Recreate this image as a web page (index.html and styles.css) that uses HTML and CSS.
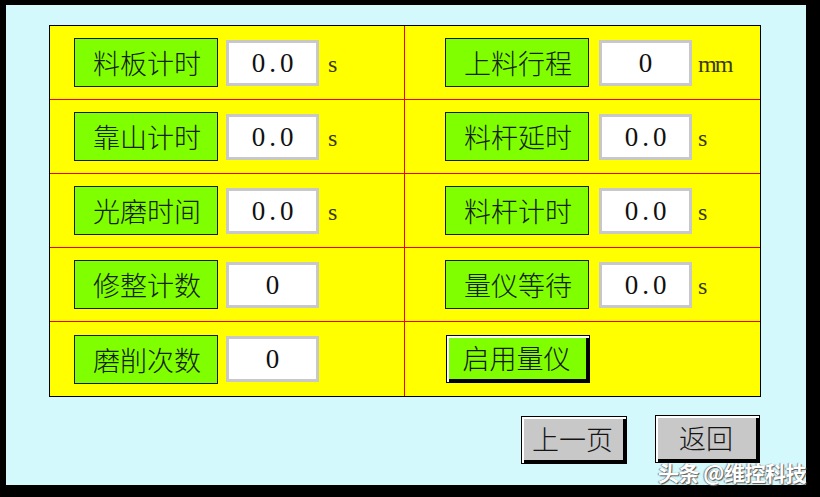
FILE: index.html
```html
<!DOCTYPE html>
<html lang="zh-CN">
<head>
<meta charset="utf-8">
<title>参数设置</title>
<link rel="stylesheet" href="styles.css">
</head>
<body>
<div class="screen">
  <div class="panel">
    <div class="cell left">
      <div class="label">料板计时</div><div class="field">0.0</div><span class="unit">s</span>
    </div>
    <div class="cell right">
      <div class="label">上料行程</div><div class="field">0</div><span class="unit">mm</span>
    </div>
    <div class="cell left">
      <div class="label">靠山计时</div><div class="field">0.0</div><span class="unit">s</span>
    </div>
    <div class="cell right">
      <div class="label">料杆延时</div><div class="field">0.0</div><span class="unit">s</span>
    </div>
    <div class="cell left">
      <div class="label">光磨时间</div><div class="field">0.0</div><span class="unit">s</span>
    </div>
    <div class="cell right">
      <div class="label">料杆计时</div><div class="field">0.0</div><span class="unit">s</span>
    </div>
    <div class="cell left">
      <div class="label">修整计数</div><div class="field">0</div>
    </div>
    <div class="cell right">
      <div class="label">量仪等待</div><div class="field">0.0</div><span class="unit">s</span>
    </div>
    <div class="cell left">
      <div class="label">磨削次数</div><div class="field">0</div>
    </div>
    <div class="cell right">
      <div class="btn btn-green">启用量仪</div>
    </div>
  </div>
  <div class="actions">
    <div class="btn btn-gray btn-prev">上一页</div>
    <div class="btn btn-gray btn-back">返回</div>
  </div>
  <div class="watermark">头条 @维控科技</div>
</div>
</body>
</html>
```

FILE: styles.css
```css
html, body {
  margin: 0;
  padding: 0;
  background: #000;
}

body {
  width: 820px;
  height: 497px;
  overflow: hidden;
  padding-top: 5px;
  padding-left: 6px;
  box-sizing: border-box;
}

.screen {
  position: relative;
  width: 800px;
  height: 480px;
  background: #d4f9fc;
  padding: 20px 0 0 43px;
  box-sizing: border-box;
  font-family: "Noto Sans CJK SC", "Noto Sans", sans-serif;
}

.panel {
  width: 712px;
  height: 372px;
  box-sizing: border-box;
  border: 1px solid #000;
  background: #f00000;
  display: grid;
  grid-template-columns: 354px 355px;
  grid-template-rows: 73px 73px 73px 73px 74px;
  column-gap: 1px;
  row-gap: 1px;
}

.cell {
  background: #ffff00;
  display: flex;
  align-items: center;
}

.cell.left {
  padding-left: 24px;
}

.cell.right {
  padding-left: 40px;
}

.label {
  width: 144px;
  height: 49px;
  box-sizing: border-box;
  border: 1px solid #1a1a1a;
  background: #7fff00;
  color: #142010;
  font-size: 27px;
  font-weight: 300;
  line-height: 1;
  display: flex;
  align-items: center;
  justify-content: center;
  padding-left: 2px;
}

.field {
  width: 93px;
  height: 46px;
  box-sizing: border-box;
  border: 3px solid #c8c8c8;
  background: #fff;
  color: #111;
  font-family: "Liberation Serif", serif;
  font-size: 27px;
  letter-spacing: 4px;
  text-indent: 4px;
  display: flex;
  align-items: center;
  justify-content: center;
  padding-top: 1px;
}

.cell.left .field {
  margin-left: 8px;
}

.cell.right .field {
  margin-left: 10px;
}

.unit {
  font-family: "Liberation Serif", serif;
  font-size: 24px;
  letter-spacing: -2px;
  color: #3a3a10;
  margin-top: 4px;
}

.cell.left .unit {
  margin-left: 9px;
}

.cell.right .unit {
  margin-left: 6px;
}

.btn {
  box-sizing: border-box;
  border: 1px solid #000;
  box-shadow: inset 2px 2px 0 #fff, inset -3px -3px 0 #000;
  font-size: 27px;
  font-weight: 300;
  line-height: 1;
  color: #151515;
  display: flex;
  align-items: center;
  justify-content: center;
  padding: 0 3px 3px 0;
}

.btn-green {
  width: 144px;
  height: 48px;
  margin-left: 1px;
  background: #7fff00;
}

.actions {
  display: flex;
  justify-content: flex-end;
  gap: 28px;
  width: 711px;
  margin-top: 19px;
}

.btn-gray {
  height: 48px;
  background: #c8c8c8;
}

.btn-prev {
  width: 106px;
}

.btn-back {
  width: 105px;
  margin-top: -1px;
}

.watermark {
  position: absolute;
  right: 0;
  bottom: 2px;
  color: #fff;
  font-size: 21px;
  font-weight: 700;
  line-height: 22px;
  letter-spacing: -0.5px;
  text-shadow: 1px 1px 1px #555, -1px 0 1px #888;
  white-space: nowrap;
}
```
